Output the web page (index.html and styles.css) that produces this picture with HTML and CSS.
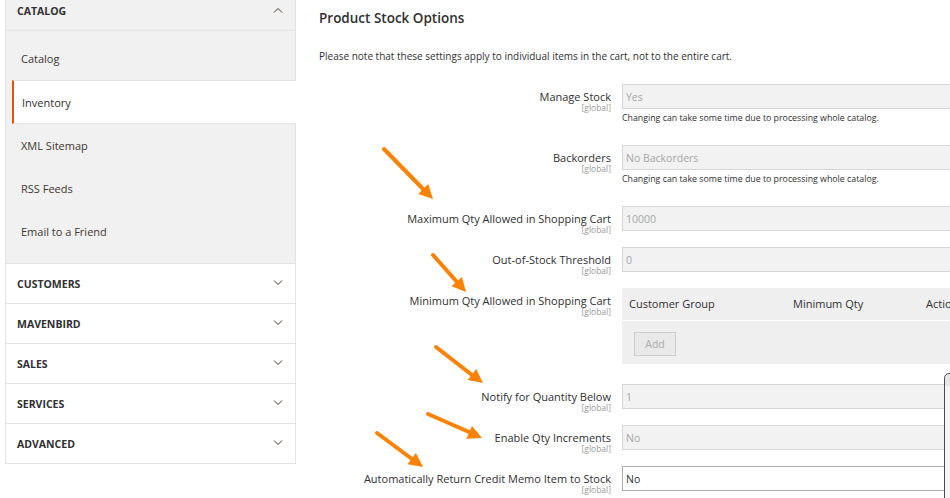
FILE: index.html
```html
<!DOCTYPE html>
<html lang="en">
<head>
<meta charset="utf-8">
<title>Inventory - Configuration</title>
<link rel="stylesheet" href="styles.css">
</head>
<body>
<div class="page">
  <aside class="sidebar">
    <div class="nav-section">
      <div class="nav-title top">
        <span>CATALOG</span>
        <svg class="chev" width="10" height="6" viewBox="0 0 10 6"><polyline points="1,5.5 5,1.5 9,5.5" fill="none" stroke="#41362f" stroke-width="1"/></svg>
      </div>
      <ul class="nav-items">
        <li>Catalog</li>
        <li class="active">Inventory</li>
        <li>XML Sitemap</li>
        <li>RSS Feeds</li>
        <li>Email to a Friend</li>
      </ul>
    </div>
    <div class="nav-title"><span>CUSTOMERS</span><svg class="chev" width="10" height="6" viewBox="0 0 10 6"><polyline points="1,0.5 5,4.5 9,0.5" fill="none" stroke="#41362f" stroke-width="1"/></svg></div>
    <div class="nav-title"><span>MAVENBIRD</span><svg class="chev" width="10" height="6" viewBox="0 0 10 6"><polyline points="1,0.5 5,4.5 9,0.5" fill="none" stroke="#41362f" stroke-width="1"/></svg></div>
    <div class="nav-title"><span>SALES</span><svg class="chev" width="10" height="6" viewBox="0 0 10 6"><polyline points="1,0.5 5,4.5 9,0.5" fill="none" stroke="#41362f" stroke-width="1"/></svg></div>
    <div class="nav-title"><span>SERVICES</span><svg class="chev" width="10" height="6" viewBox="0 0 10 6"><polyline points="1,0.5 5,4.5 9,0.5" fill="none" stroke="#41362f" stroke-width="1"/></svg></div>
    <div class="nav-title"><span>ADVANCED</span><svg class="chev" width="10" height="6" viewBox="0 0 10 6"><polyline points="1,0.5 5,4.5 9,0.5" fill="none" stroke="#41362f" stroke-width="1"/></svg></div>
  </aside>

  <main class="content">
    <h2 class="section-title">Product Stock Options</h2>
    <p class="note">Please note that these settings apply to individual items in the cart, not to the entire cart.</p>

    <div class="fields">
      <div class="field">
        <div class="label"><span class="label-text">Manage Stock</span><span class="scope">[global]</span></div>
        <div class="control">
          <div class="input">Yes</div>
          <div class="comment">Changing can take some time due to processing whole catalog.</div>
        </div>
      </div>
      <div class="field">
        <div class="label"><span class="label-text">Backorders</span><span class="scope">[global]</span></div>
        <div class="control">
          <div class="input">No Backorders</div>
          <div class="comment">Changing can take some time due to processing whole catalog.</div>
        </div>
      </div>
      <div class="field">
        <div class="label"><span class="label-text">Maximum Qty Allowed in Shopping Cart</span><span class="scope">[global]</span></div>
        <div class="control"><div class="input">10000</div></div>
      </div>
      <div class="field">
        <div class="label"><span class="label-text">Out-of-Stock Threshold</span><span class="scope">[global]</span></div>
        <div class="control"><div class="input">0</div></div>
      </div>
      <div class="field field-table">
        <div class="label"><span class="label-text">Minimum Qty Allowed in Shopping Cart</span><span class="scope">[global]</span></div>
        <div class="control">
          <div class="grid">
            <div class="grid-head">
              <span class="col-group">Customer Group</span>
              <span class="col-qty">Minimum Qty</span>
              <span class="col-action">Action</span>
            </div>
            <div class="grid-body">
              <span class="btn-add">Add</span>
            </div>
          </div>
        </div>
      </div>
      <div class="field">
        <div class="label"><span class="label-text">Notify for Quantity Below</span><span class="scope">[global]</span></div>
        <div class="control"><div class="input">1</div></div>
      </div>
      <div class="field">
        <div class="label"><span class="label-text">Enable Qty Increments</span><span class="scope">[global]</span></div>
        <div class="control"><div class="input">No</div></div>
      </div>
      <div class="field">
        <div class="label"><span class="label-text">Automatically Return Credit Memo Item to Stock</span><span class="scope">[global]</span></div>
        <div class="control"><div class="input enabled">No</div></div>
      </div>
    </div>
  </main>

  <svg class="arrows" width="950" height="498" viewBox="0 0 950 498">
    <g stroke="#fd8204" stroke-width="4" stroke-linecap="round" fill="none">
      <line x1="384" y1="149" x2="424" y2="190"/>
      <line x1="433" y1="255" x2="457" y2="282"/>
      <line x1="436" y1="347" x2="472" y2="375"/>
      <line x1="428" y1="414" x2="469" y2="432"/>
      <line x1="377" y1="433" x2="412" y2="459"/>
    </g>
    <g fill="#fd8204">
      <polygon points="433,199 418.2,193.9 428.2,184.1"/>
      <polygon points="466,292 451.5,286.3 461.9,276.9"/>
      <polygon points="483,383 467.6,380.1 476.2,368.9"/>
      <polygon points="482,438 466.4,438.7 472,425.9"/>
      <polygon points="423,467 407.5,464.3 415.9,453.1"/>
    </g>
  </svg>

  <div class="scroll-edge"></div>
</div>
</body>
</html>
```

FILE: styles.css
```css
* { box-sizing: border-box; }

html, body {
  margin: 0;
  padding: 0;
  background: #ffffff;
  overflow: hidden;
}

body {
  font-family: "Open Sans", "Noto Sans", "Liberation Sans", sans-serif;
  color: #303030;
}

.page {
  position: relative;
  width: 950px;
  height: 498px;
  display: flex;
  align-items: flex-start;
  overflow: hidden;
}

/* ---------- Sidebar ---------- */
.sidebar {
  flex: none;
  width: 291px;
  margin-left: 5px;
  border-left: 1px solid #e3e3e3;
  border-right: 1px solid #e3e3e3;
  border-bottom: 1px solid #e3e3e3;
  background: #ffffff;
}

.nav-title {
  display: flex;
  align-items: center;
  justify-content: space-between;
  height: 40px;
  padding: 0 12px 0 11px;
  border-top: 1px solid #e3e3e3;
  font-size: 10.5px;
  font-weight: 700;
  color: #303030;
  background: #ffffff;
}

.nav-title.top {
  height: 31px;
  border-top: none;
  border-bottom: 1px solid #e3e3e3;
  background: #f1f1f1;
  padding-bottom: 9px;
}

.chev { display: block; margin-top: -2px; }

.nav-items {
  list-style: none;
  margin: 0;
  padding: 6px 0 10px;
  background: #f1f1f1;
}

.nav-items li {
  height: 43px;
  display: flex;
  align-items: center;
  padding-left: 15px;
  font-size: 11px;
  color: #41362f;
}

.nav-items li.active {
  height: 44px;
  margin-left: 6px;
  margin-right: -1px;
  padding-left: 8px;
  border-left: 2px solid #eb5202;
  border-top: 1px solid #e3e3e3;
  border-bottom: 1px solid #e3e3e3;
  background: #ffffff;
  color: #303030;
}

/* ---------- Content ---------- */
.content {
  flex: none;
  width: 700px;
  margin-left: 23px;
}

.section-title {
  margin: 8px 0 0;
  font-size: 13.5px;
  line-height: 20px;
  font-weight: 600;
  color: #303030;
}

.note {
  margin: 21px 0 0;
  font-size: 10px;
  line-height: 14px;
  color: #303030;
}

.fields { margin-top: 21px; }

.field {
  display: grid;
  grid-template-columns: 292px 380px;
  column-gap: 11px;
  align-items: start;
  margin-bottom: 16px;
}

.field-table { margin-bottom: 20px; }

.label {
  height: 25px;
  text-align: right;
  padding-top: 7px;
}

.label-text {
  display: block;
  font-size: 11px;
  line-height: 12px;
  color: #303030;
}

.scope {
  display: block;
  font-size: 8.5px;
  line-height: 9px;
  color: #9a9a9a;
}

.input {
  height: 25px;
  border: 1px solid #d6d6d6;
  background: #f2f2f2;
  padding: 0 3px;
  font-size: 10.5px;
  line-height: 24px;
  color: #a6a6a6;
}

.input.enabled {
  background: #ffffff;
  border-color: #adadad;
  color: #303030;
}

.comment {
  margin: 2px 0 4px;
  font-size: 8.8px;
  line-height: 14px;
  color: #303030;
}

.grid { width: 380px; }

.grid-head {
  height: 33px;
  background: #efefef;
  border-bottom: 1px solid #ffffff;
  font-size: 11px;
  line-height: 32px;
  color: #303030;
  display: flex;
}

.col-group { width: 171px; padding-left: 7px; }
.col-qty { width: 133px; }
.col-action { flex: 1; }

.grid-body {
  height: 43px;
  background: #efefef;
  padding: 10px 12px;
}

.btn-add {
  display: inline-block;
  width: 42px;
  height: 24px;
  border: 1px solid #cccccc;
  background: #e9e9e9;
  text-align: center;
  font-size: 10.5px;
  line-height: 22px;
  color: #aaaaaa;
}

/* ---------- Overlays ---------- */
.arrows {
  position: absolute;
  left: 0;
  top: 0;
  pointer-events: none;
}

.scroll-edge {
  position: absolute;
  left: 944px;
  top: 373px;
  width: 14px;
  height: 140px;
  border: 1px solid #4d4d4d;
  border-radius: 5px 0 0 0;
  background: linear-gradient(to bottom, #e6e6e6 0, #e6e6e6 12px, #f4f4f4 12px);
}
```
